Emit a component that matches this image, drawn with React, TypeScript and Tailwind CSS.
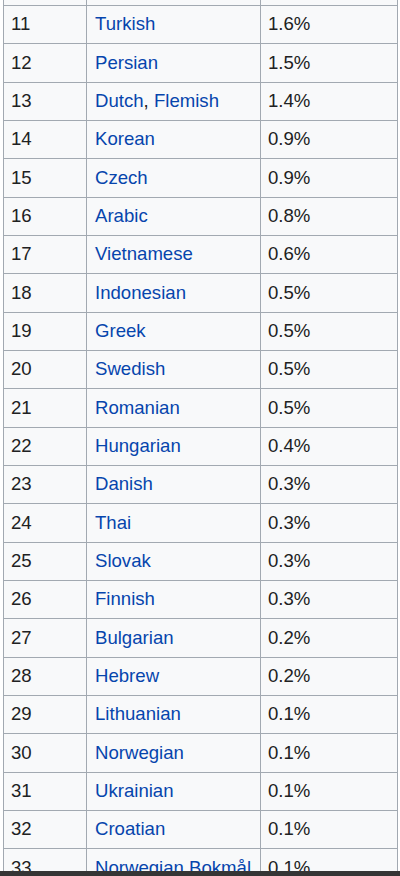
import React from "react";

const rows: [string, string, string][] = [
  ["11", "Turkish", "1.6%"],
  ["12", "Persian", "1.5%"],
  ["13", "Dutch, Flemish", "1.4%"],
  ["14", "Korean", "0.9%"],
  ["15", "Czech", "0.9%"],
  ["16", "Arabic", "0.8%"],
  ["17", "Vietnamese", "0.6%"],
  ["18", "Indonesian", "0.5%"],
  ["19", "Greek", "0.5%"],
  ["20", "Swedish", "0.5%"],
  ["21", "Romanian", "0.5%"],
  ["22", "Hungarian", "0.4%"],
  ["23", "Danish", "0.3%"],
  ["24", "Thai", "0.3%"],
  ["25", "Slovak", "0.3%"],
  ["26", "Finnish", "0.3%"],
  ["27", "Bulgarian", "0.2%"],
  ["28", "Hebrew", "0.2%"],
  ["29", "Lithuanian", "0.1%"],
  ["30", "Norwegian", "0.1%"],
  ["31", "Ukrainian", "0.1%"],
  ["32", "Croatian", "0.1%"],
  ["33", "Norwegian Bokmål", "0.1%"],
];

function Row({ n, lang, pct, h }: { n: string; lang: React.ReactNode; pct: string; h: string }) {
  return (
    <div className={`flex border-b border-[#a2a9b1] ${h} shrink-0`}>
      <div className="w-[83px] border-l border-[#a2a9b1] flex items-center pl-[7px] text-[#202122] overflow-hidden whitespace-nowrap">
        {n}
      </div>
      <div className="w-[174px] border-l border-[#a2a9b1] flex items-center pl-[8px] text-[#0645ad] overflow-hidden whitespace-nowrap">
        {lang}
      </div>
      <div className="w-[138px] border-l border-r border-[#a2a9b1] flex items-center pl-[7px] text-[#202122] overflow-hidden whitespace-nowrap">
        {pct}
      </div>
    </div>
  );
}

export default function App() {
  return (
    <div
      className="w-[400px] h-[876px] overflow-hidden bg-white flex flex-col text-[18.6px] leading-none"
      style={{ fontFamily: '"Liberation Sans", Arial, sans-serif' }}
    >
      <div className="flex-1 overflow-hidden pl-[3px]">
        <div className="flex flex-col bg-[#f8f9fa] w-[395px]">
          <Row n="" lang="" pct="" h="h-[6px]" />
          {rows.map(([n, l, p]) => (
            <Row
              key={n}
              n={n}
              lang={
                n === "13" ? (
                  <span>
                    Dutch<span className="text-[#202122]">,</span> Flemish
                  </span>
                ) : (
                  l
                )
              }
              pct={p}
              h="h-[38.33px]"
            />
          ))}
        </div>
      </div>
      <div className="h-[5px] bg-[#353535] shrink-0" />
    </div>
  );
}
